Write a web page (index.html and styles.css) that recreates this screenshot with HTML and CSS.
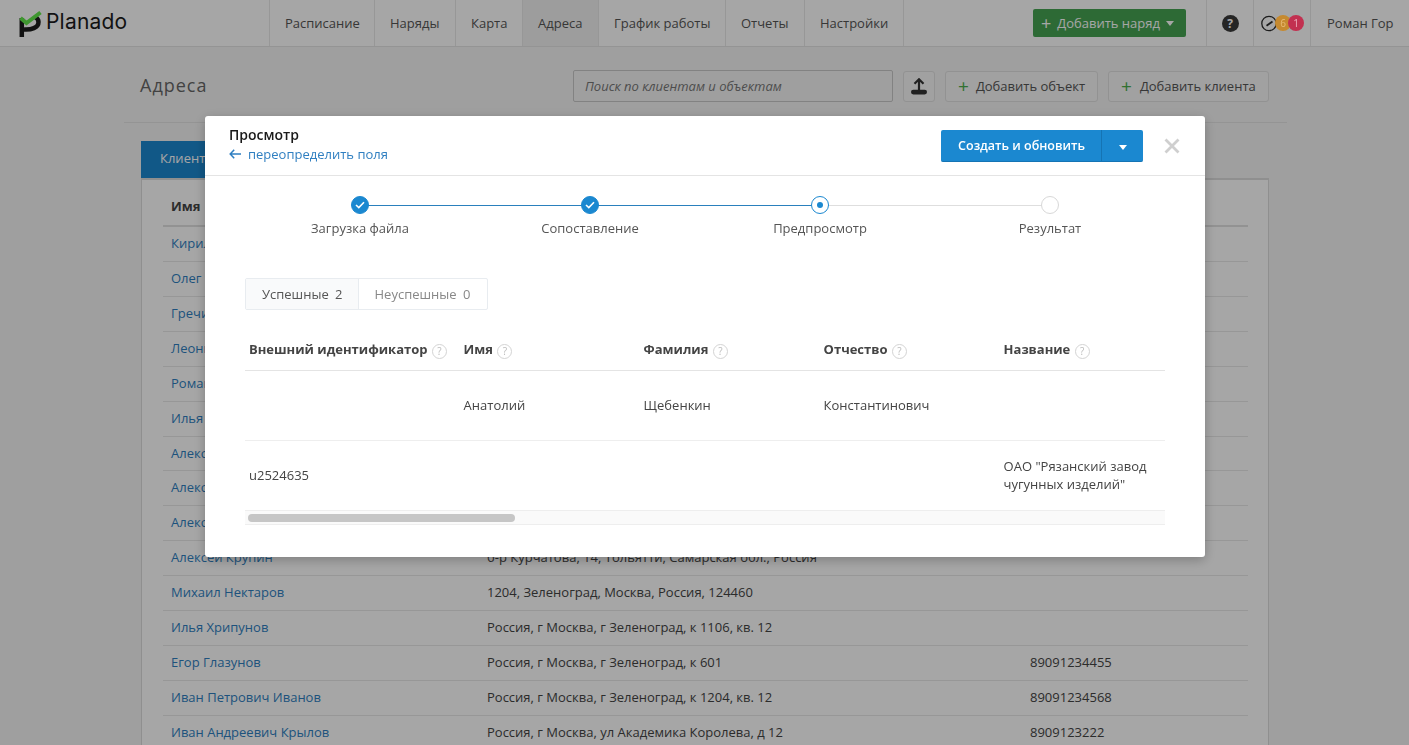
FILE: index.html
```html
<!DOCTYPE html>
<html lang="ru">
<head>
<meta charset="utf-8">
<title>Адреса</title>
<link rel="stylesheet" href="styles.css">
</head>
<body>
<header class="navbar">
  <a class="logo">
    <svg class="logo-mark" width="24" height="28" viewBox="0 0 24 28">
      <path d="M2.8 27 V8 M5 19.5 C12 20 19.5 18 19.5 12 C19.5 9.5 18 8 16 7" fill="none" stroke="#1c1c1c" stroke-width="4.5"/>
      <path d="M1.5 8 L7.5 13 L21.5 2.5" fill="none" stroke="#62e84a" stroke-width="4"/>
    </svg>
    <span class="logo-text">Planado</span>
  </a>
  <nav class="nav">
    <a class="nav-item">Расписание</a>
    <a class="nav-item">Наряды</a>
    <a class="nav-item">Карта</a>
    <a class="nav-item nav-active">Адреса</a>
    <a class="nav-item">График работы</a>
    <a class="nav-item">Отчеты</a>
    <a class="nav-item nav-last">Настройки</a>
  </nav>
  <div class="nav-add">
    <button class="btn-green"><span class="plus">+</span> Добавить наряд <i class="caret"></i></button>
  </div>
  <div class="nav-cell nav-help"><span class="help-icon">?</span></div>
  <div class="nav-cell nav-stats">
    <svg class="gauge" width="16" height="17" viewBox="0 0 16 17"><circle cx="8" cy="8.5" r="7.2" fill="none" stroke="#2b2b2b" stroke-width="1.3"/><path d="M5.5 10.8 L11.5 6.5" stroke="#2b2b2b" stroke-width="1.8"/></svg>
    <span class="badge badge-orange">6</span>
    <span class="badge badge-red">1</span>
  </div>
  <div class="nav-cell nav-user">Роман Гор</div>
</header>

<main class="page">
  <div class="page-head">
    <h1 class="page-title">Адреса</h1>
    <div class="page-actions">
      <div class="search">Поиск по клиентам и объектам</div>
      <button class="btn btn-icon">
        <svg width="16" height="17" viewBox="0 0 16 17"><path d="M3.5 5.8 L8 1.3 L12.5 5.8 M8 1.3 V12" fill="none" stroke="#333" stroke-width="2.2"/><rect x="0" y="11.8" width="16" height="4.6" rx="2.3" fill="#333"/></svg>
      </button>
      <button class="btn btn-obj"><span class="plus-green">+</span>Добавить объект</button>
      <button class="btn btn-client"><span class="plus-green">+</span>Добавить клиента</button>
    </div>
  </div>
  <div class="tabs"><a class="tab-active">Клиенты</a></div>
  <section class="card">
    <div class="row row-head"><span class="c-name">Имя</span><span class="c-addr">Адрес</span><span class="c-phone">Телефон</span></div>
    <div class="row"><a class="c-name">Кирилл Соколов</a></div>
    <div class="row"><a class="c-name">Олег Петров</a></div>
    <div class="row"><a class="c-name">Гречишников</a></div>
    <div class="row"><a class="c-name">Леонид Орлов</a></div>
    <div class="row"><a class="c-name">Роман Гор</a></div>
    <div class="row"><a class="c-name">Илья Попов</a></div>
    <div class="row"><a class="c-name">Алексей Смирнов</a></div>
    <div class="row"><a class="c-name">Алексей Иванов</a></div>
    <div class="row"><a class="c-name">Алексей Попов</a></div>
    <div class="row"><a class="c-name">Алексей Крупин</a><span class="c-addr">б-р Курчатова, 14, Тольятти, Самарская обл., Россия</span></div>
    <div class="row"><a class="c-name">Михаил Нектаров</a><span class="c-addr">1204, Зеленоград, Москва, Россия, 124460</span></div>
    <div class="row"><a class="c-name">Илья Хрипунов</a><span class="c-addr">Россия, г Москва, г Зеленоград, к 1106, кв. 12</span></div>
    <div class="row"><a class="c-name">Егор Глазунов</a><span class="c-addr">Россия, г Москва, г Зеленоград, к 601</span><span class="c-phone">89091234455</span></div>
    <div class="row"><a class="c-name">Иван Петрович Иванов</a><span class="c-addr">Россия, г Москва, г Зеленоград, к 1204, кв. 12</span><span class="c-phone">89091234568</span></div>
    <div class="row"><a class="c-name">Иван Андреевич Крылов</a><span class="c-addr">Россия, г Москва, ул Академика Королева, д 12</span><span class="c-phone">8909123222</span></div>
  </section>
</main>

<div class="overlay">
  <div class="modal">
    <div class="modal-head">
      <div class="modal-titles">
        <div class="modal-title">Просмотр</div>
        <a class="modal-back">
          <svg width="12" height="10" viewBox="0 0 12 10"><path d="M5.2 0.8 L1.2 5 L5.2 9.2 M1.2 5 L12 5" fill="none" stroke="#2f7fc1" stroke-width="1.5"/></svg>
          переопределить поля
        </a>
      </div>
      <div class="split">
        <button class="split-main">Создать и обновить</button>
        <button class="split-caret"><i class="caret caret-white"></i></button>
      </div>
      <svg class="close" width="16" height="16" viewBox="0 0 16 16"><path d="M1.5 1.5 L14.5 14.5 M14.5 1.5 L1.5 14.5" stroke="#cfcfcf" stroke-width="2.8"/></svg>
    </div>
    <div class="modal-body">
      <ol class="steps">
        <li class="step step-done">
          <span class="dot dot-done"><svg width="10" height="8" viewBox="0 0 10 8"><path d="M1 4 L3.8 6.6 L9 1.2" fill="none" stroke="#fff" stroke-width="1.6"/></svg></span>
          <span>Загрузка файла</span>
        </li>
        <li class="step step-done">
          <span class="dot dot-done"><svg width="10" height="8" viewBox="0 0 10 8"><path d="M1 4 L3.8 6.6 L9 1.2" fill="none" stroke="#fff" stroke-width="1.6"/></svg></span>
          <span>Сопоставление</span>
        </li>
        <li class="step">
          <span class="dot dot-current"><i></i></span>
          <span>Предпросмотр</span>
        </li>
        <li class="step step-end">
          <span class="dot"></span>
          <span>Результат</span>
        </li>
      </ol>
      <div class="filter">
        <a class="filter-item filter-on">Успешные <em>2</em></a>
        <a class="filter-item filter-off">Неуспешные <em>0</em></a>
      </div>
      <div class="preview">
        <div class="preview-row preview-head">
          <div>Внешний идентификатор <i class="q">?</i></div>
          <div>Имя <i class="q">?</i></div>
          <div>Фамилия <i class="q">?</i></div>
          <div>Отчество <i class="q">?</i></div>
          <div>Название <i class="q">?</i></div>
        </div>
        <div class="preview-row">
          <div></div>
          <div>Анатолий</div>
          <div>Щебенкин</div>
          <div>Константинович</div>
          <div></div>
        </div>
        <div class="preview-row">
          <div>u2524635</div>
          <div></div>
          <div></div>
          <div></div>
          <div>ОАО "Рязанский завод чугунных изделий"</div>
        </div>
        <div class="scrollbar"><span class="thumb"></span></div>
      </div>
    </div>
  </div>
</div>
</body>
</html>
```
FILE: styles.css
```css
* { box-sizing: border-box; }
html, body { margin: 0; height: 745px; overflow: hidden; }
body {
  background: #f5f5f5;
  color: #444;
  font: 13px/18px "Open Sans", "Noto Sans", sans-serif;
}
a { color: inherit; text-decoration: none; }
button { font: inherit; cursor: pointer; }
i, em { font-style: normal; }

/* top bar */
.navbar {
  display: flex;
  height: 47px;
  background: #fff;
  border-bottom: 1px solid #e4e4e4;
}
.logo { display: flex; align-items: flex-start; width: 269px; padding: 10px 0 0 19px; }
.logo-mark { flex: none; }
.logo-text {
  margin: -3px 0 0 3px;
  font: 400 21px/30px "Inter", sans-serif;
  letter-spacing: 0.2px;
  color: #1c1c1c;
}
.nav {
  display: grid;
  grid-template-columns: 105px 81px 67px 76px 127px 79px 100px;
  width: 635px;
}
.nav-item {
  padding: 14px 0 0 15px;
  border-left: 1px solid #e8e8e8;
  color: #555;
  white-space: nowrap;
}
.nav-active { background: #f2f2f2; }
.nav-last { border-right: 1px solid #e8e8e8; }
.nav-add { width: 302px; padding: 9px 0 0 129px; }
.btn-green {
  display: flex;
  align-items: center;
  gap: 6px;
  width: 153px;
  height: 28px;
  padding: 0 8px;
  background: #45a452;
  border: 0;
  border-radius: 2px;
  color: #fff;
  white-space: nowrap;
}
.plus { font-size: 18px; line-height: 18px; }
.caret {
  display: inline-block;
  border: 4.5px solid transparent;
  border-top: 5px solid #fff;
  border-bottom-width: 0;
  vertical-align: middle;
}
.nav-cell { display: flex; align-items: center; border-left: 1px solid #e8e8e8; }
.nav-help { width: 47px; justify-content: center; }
.help-icon {
  width: 17px;
  height: 17px;
  border-radius: 50%;
  background: #3a3a3a;
  color: #fff;
  font: 700 12px/17px "Open Sans", sans-serif;
  text-align: center;
}
.nav-stats { width: 57px; padding-left: 7px; }
.gauge { flex: none; }
.badge {
  position: relative;
  z-index: 11;
  flex: none;
  width: 16px;
  height: 16px;
  border-radius: 50%;
  font-size: 10px;
  line-height: 16px;
  text-align: center;
}
.badge-orange { margin-left: -2px; background: #c68a30; color: #e8bb75; }
.badge-red { margin-left: -3px; background: #c23050; color: #efb2c2; }
.nav-user { flex: 1; padding-left: 16px; color: #555; }

/* page */
.page { width: 1163px; margin-left: 124px; }
.page-head {
  display: flex;
  justify-content: space-between;
  height: 76px;
  padding: 23px 18px 0 16px;
  border-bottom: 1px solid #e4e4e4;
}
.page-title {
  margin: 0;
  font: 400 18px/30px "Open Sans", sans-serif;
  letter-spacing: 1px;
  color: #666;
}
.page-actions { display: flex; gap: 10px; align-items: flex-start; }
.search {
  width: 320px;
  height: 32px;
  padding: 0 11px;
  background: #f5f5f5;
  border: 1px solid #c8c8c8;
  border-radius: 2px;
  color: #777;
  font-style: italic;
  line-height: 30px;
}
.btn {
  display: flex;
  align-items: center;
  height: 31px;
  margin-top: 1px;
  padding: 0 12px 2px;
  background: #f7f7f7;
  border: 1px solid #e0e0e0;
  border-radius: 3px;
  color: #555;
  white-space: nowrap;
}
.btn-icon { width: 32px; padding: 0 7px; }
.btn-obj { width: 153px; }
.btn-client { width: 161px; }
.plus-green { margin-right: 7px; color: #4cae4c; font-size: 19px; line-height: 18px; }
.btn-client .plus-green { margin-right: 8px; }
.tabs { display: flex; padding: 18px 0 0 17px; }
.tab-active {
  width: 110px;
  height: 37px;
  padding: 8px 19px;
  background: #1b88d0;
  color: #fff;
}
.card {
  width: 1128px;
  margin-left: 17px;
  padding: 0 20px 0 21px;
  background: #fff;
  border: 1px solid #dcdcdc;
  border-top-width: 2px;
}
.row {
  display: flex;
  height: 34.93px;
  padding: 7px 0 0 8px;
  border-bottom: 1px solid #e8e8e8;
}
.row-head {
  height: 47px;
  padding-top: 17px;
  border-bottom: 2px solid #e0e0e0;
  font-weight: 700;
}
.c-name { width: 316px; color: #2f7fc1; flex: none; }
.row-head .c-name { color: #444; }
.c-addr { width: 543px; flex: none; }
.row-head .c-addr, .row-head .c-phone { visibility: hidden; }

/* modal */
.overlay {
  position: fixed;
  z-index: 10;
  inset: 0;
  padding: 116px 204px 0 205px;
  background: rgba(0, 0, 0, .35);
}
.modal {
  height: 441px;
  background: #fff;
  border-radius: 3px;
  box-shadow: 0 3px 12px rgba(0, 0, 0, .25);
}
.modal-head {
  display: flex;
  align-items: flex-start;
  height: 60px;
  padding: 9px 25px 0 24px;
  border-bottom: 1px solid #e4e4e4;
}
.modal-titles { flex: 1; }
.modal-title { color: #1a1a1a; font-size: 14px; font-weight: 600; line-height: 20px; }
.modal-back { display: flex; align-items: center; gap: 7px; color: #2f7fc1; line-height: 18px; }
.split { display: flex; margin: 5px 21px 0 0; }
.split-main, .split-caret {
  height: 32px;
  background: #1b88d0;
  border: 0;
  border-bottom: 1px solid #1574b4;
  color: #fff;
}
.split-main { width: 160px; padding: 0 0 0 1px; border-radius: 2px 0 0 2px; font-weight: 600; font-size: 12.5px; }
.split-caret { width: 42px; padding: 0; border-left: 1px solid #1574b4; border-radius: 0 2px 2px 0; }
.close { margin-top: 13px; }
.modal-body { padding: 20px 40px 0; }
.steps {
  display: grid;
  grid-template-columns: repeat(4, 230px);
  margin: 0;
  padding: 0;
  list-style: none;
}
.step {
  position: relative;
  display: flex;
  flex-direction: column;
  align-items: center;
  gap: 5px;
  color: #555;
}
.step::after {
  content: "";
  position: absolute;
  top: 9px;
  left: 50%;
  width: 100%;
  height: 1px;
  background: #dedede;
}
.step-done::after { background: #2a80bd; }
.step-end::after { display: none; }
.dot {
  position: relative;
  z-index: 1;
  display: flex;
  align-items: center;
  justify-content: center;
  width: 18px;
  height: 18px;
  background: #fff;
  border: 1px solid #d8d8d8;
  border-radius: 50%;
}
.dot-done { background: #1b88d0; border-color: #1b88d0; }
.dot-current { border-color: #1b88d0; }
.dot-current i { width: 6px; height: 6px; background: #1b88d0; border-radius: 50%; }
.filter {
  display: inline-flex;
  height: 32px;
  margin-top: 41px;
  border: 1px solid #e8ecf0;
  border-radius: 2px;
  color: #888;
}
.filter-item { padding: 6px 16px 0; }
.filter-on { padding-right: 15px; border-right: 1px solid #e8ecf0; background: #f9fafb; color: #555; }
.filter-off { padding-right: 17px; }
.filter em { margin-left: 3px; }
.preview { width: 920px; margin-top: 20px; }
.preview-row {
  display: grid;
  grid-template-columns: 214.6px 180px 180px 180px 165.4px;
  align-items: center;
  height: 70px;
  padding-bottom: 2px;
  border-bottom: 1px solid #eee;
  line-height: 18px;
}
.preview-row > div { padding: 0 4px; }
.preview-head { height: 41px; border-bottom-color: #e4e4e4; font-weight: 700; white-space: nowrap; color: #444; }
.q {
  display: inline-block;
  width: 15px;
  height: 15px;
  margin-left: 1px;
  border: 1px solid #d4d4d4;
  border-radius: 50%;
  color: #bbb;
  font-size: 10px;
  font-weight: 400;
  line-height: 13px;
  text-align: center;
  vertical-align: -1px;
}
.scrollbar {
  height: 14px;
  padding: 3px;
  background: #fafafa;
  border-bottom: 1px solid #eee;
}
.thumb { display: block; width: 267px; height: 8px; background: #c6c6c6; border-radius: 4px; }
```
